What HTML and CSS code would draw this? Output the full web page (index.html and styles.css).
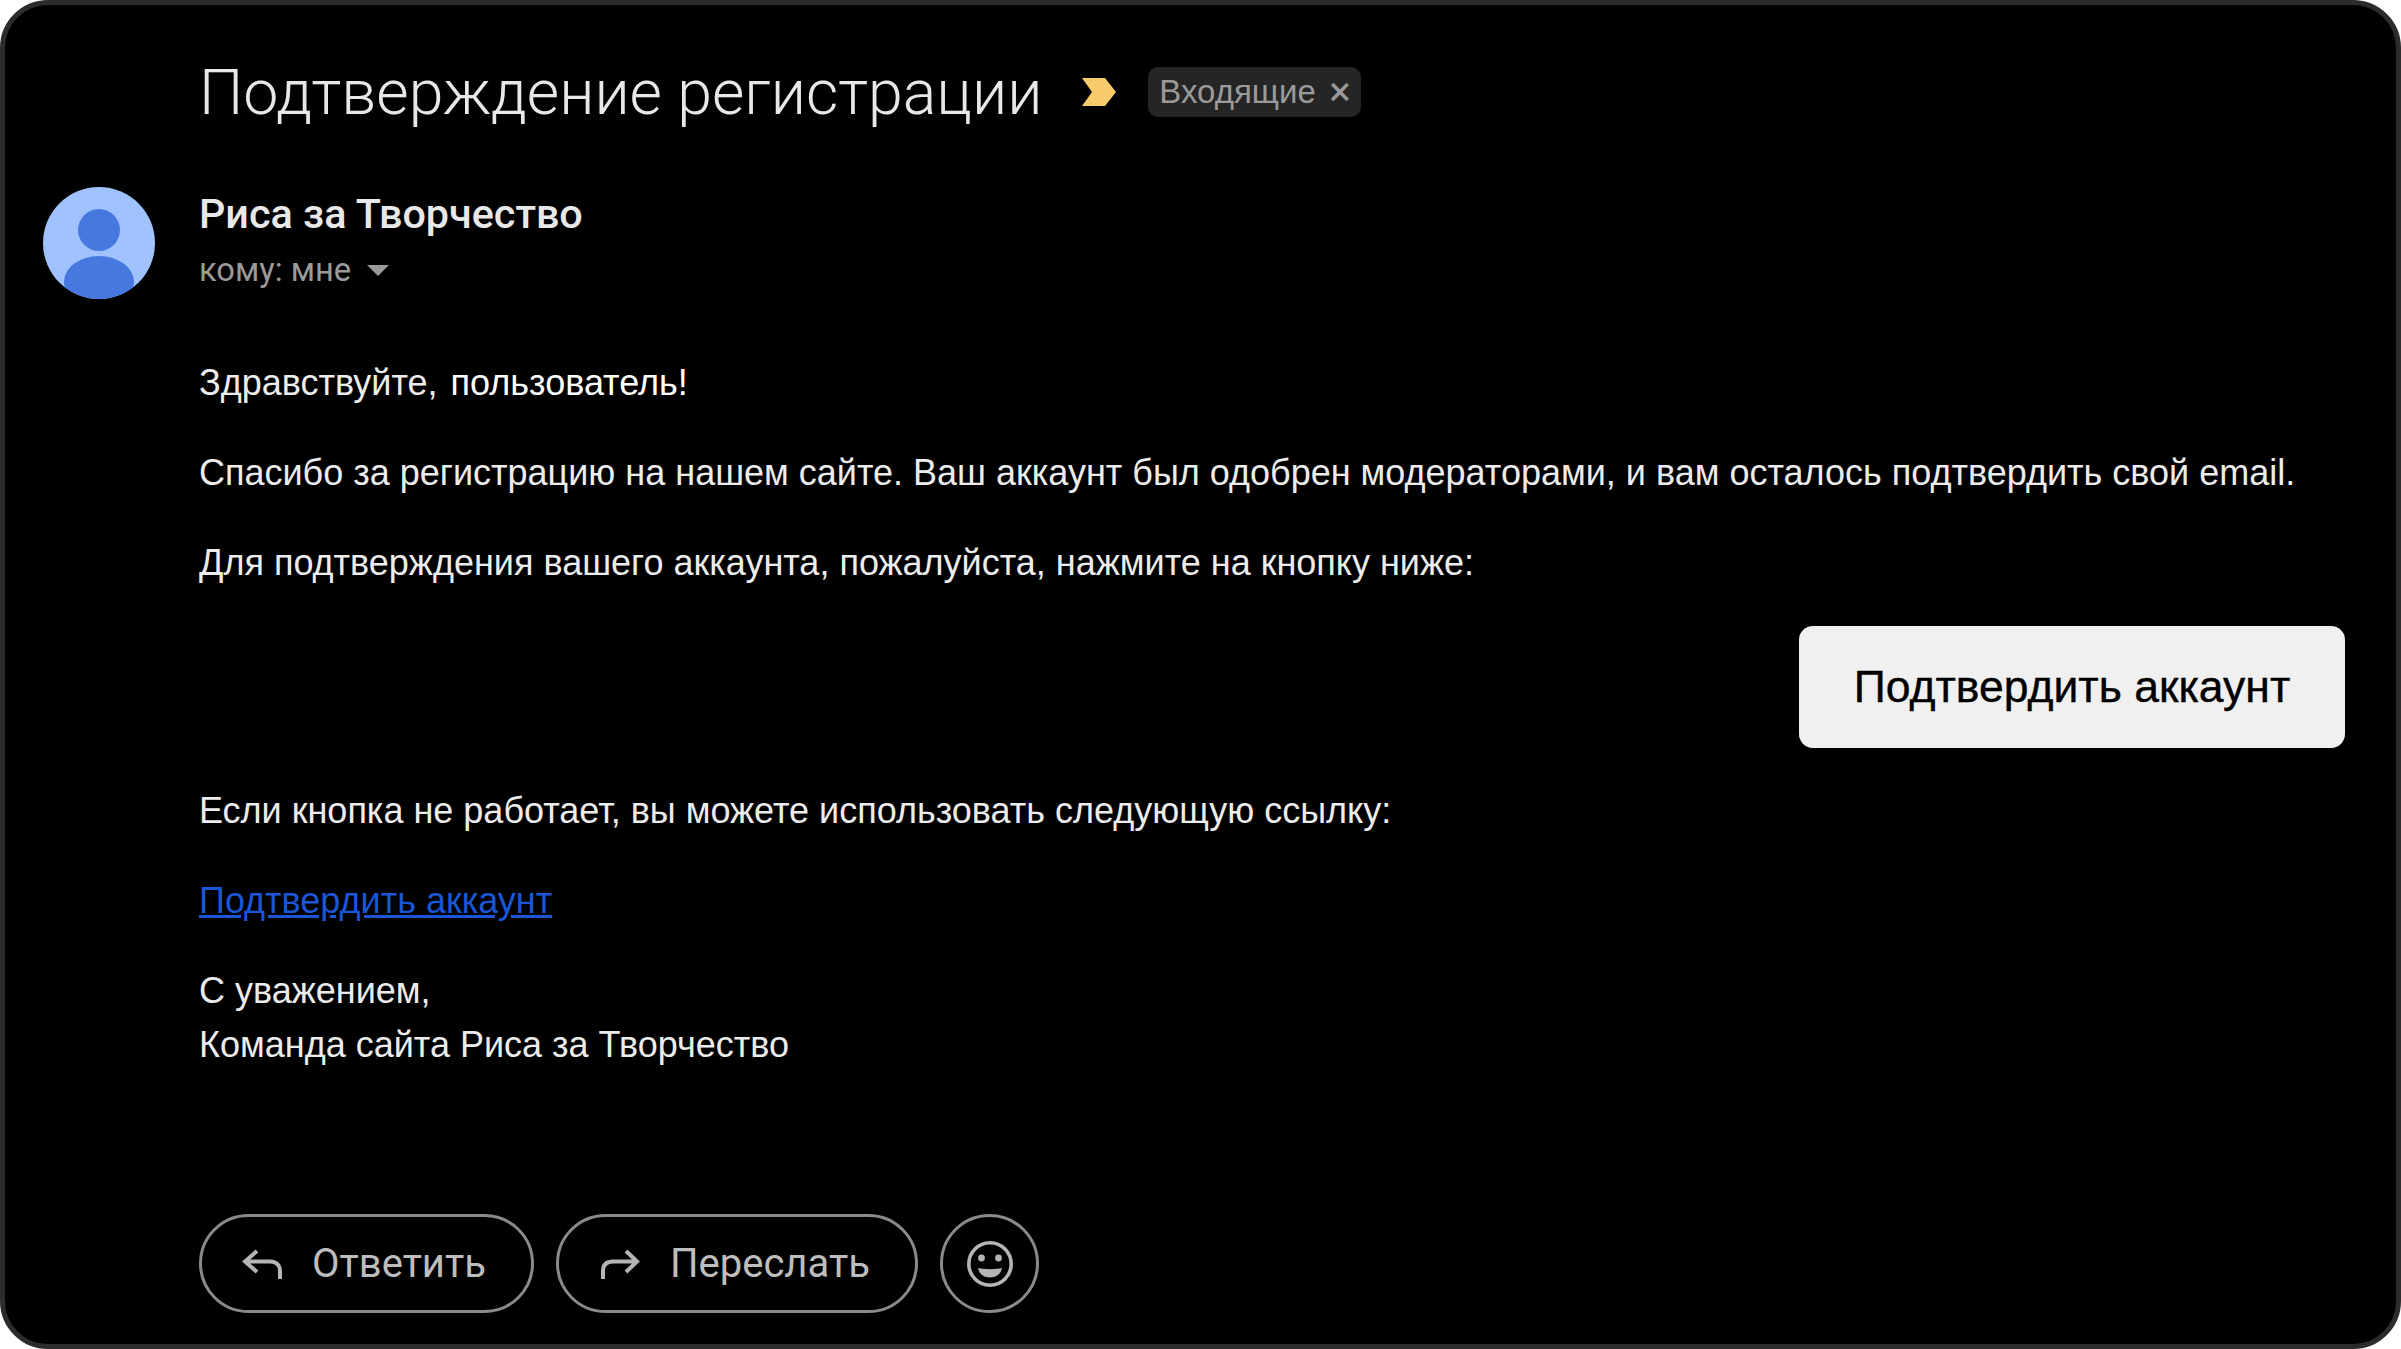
FILE: index.html
```html
<!DOCTYPE html>
<html lang="ru">
<head>
    <meta charset="UTF-8">
    <meta name="viewport" content="width=device-width, initial-scale=1.0">
    <title>Подтверждение регистрации</title>
    <link rel="stylesheet" href="styles.css">
</head>
<body>
    <div class="mail">
        <div class="subject">
            <h1>Подтверждение регистрации</h1>
            <svg class="marker" viewBox="0 0 34 28" width="34" height="28"><path d="M0 0H23L34 14L23 28H0L10 14Z" fill="#f7cb6b"/></svg>
            <span class="label">Входящие<span class="label-x">×</span></span>
        </div>
        <div class="sender">
            <svg class="avatar" viewBox="0 0 112 112" width="112" height="112">
                <defs><clipPath id="round"><circle cx="56" cy="56" r="56"/></clipPath></defs>
                <g clip-path="url(#round)">
                    <rect width="112" height="112" fill="#a0c3ff"/>
                    <circle cx="56" cy="43" r="21" fill="#4678e0"/>
                    <ellipse cx="56" cy="95" rx="35" ry="26" fill="#4678e0"/>
                </g>
            </svg>
            <div class="sender-info">
                <div class="sender-name">Риса за Творчество</div>
                <div class="sender-to">кому: мне<span class="caret"></span></div>
            </div>
        </div>
        <div class="body">
            <p>Здравствуйте, <span class="user">пользователь!</span></p>
            <p>Спасибо за регистрацию на нашем сайте. Ваш аккаунт был одобрен модераторами, и вам осталось подтвердить свой email.</p>
            <p>Для подтверждения вашего аккаунта, пожалуйста, нажмите на кнопку ниже:</p>
            <div class="confirm-row"><a class="confirm" href="#">Подтвердить аккаунт</a></div>
            <p>Если кнопка не работает, вы можете использовать следующую ссылку:</p>
            <p><a class="link" href="#">Подтвердить аккаунт</a></p>
            <p>С уважением,<br>Команда сайта Риса за Творчество</p>
        </div>
        <div class="actions">
            <button class="action reply">
                <svg viewBox="0 0 40 32" width="40" height="32"><path d="M15 3L3 13.5L15 24M3 13.5H28C34 13.5 38 17 38 23V31" fill="none" stroke="#b5b5b5" stroke-width="4"/></svg>
                Ответить
            </button>
            <button class="action forward">
                <svg viewBox="0 0 40 32" width="40" height="32"><path d="M26 3L37 13.5L26 24M37 13.5H13C6 13.5 3 17 3 23V31" fill="none" stroke="#b5b5b5" stroke-width="4"/></svg>
                Переслать
            </button>
            <button class="action emoji">
                <svg viewBox="0 0 48 48" width="48" height="48">
                    <circle cx="24" cy="24" r="21.2" fill="none" stroke="#b5b5b5" stroke-width="3.6"/>
                    <circle cx="15.5" cy="18" r="3.4" fill="#b5b5b5"/>
                    <circle cx="32.5" cy="18" r="3.4" fill="#b5b5b5"/>
                    <path d="M12 28C18 29.5 30 29.5 36 28C35 34 30 37.5 24 37.5C18 37.5 13 34 12 28Z" fill="#b5b5b5"/>
                </svg>
            </button>
        </div>
    </div>
</body>
</html>
```

FILE: styles.css
```css
html, body {
    margin: 0;
    height: 100%;
    background-color: #fff;
}
body {
    font-family: "Liberation Sans", Arial, sans-serif;
}
.mail {
    box-sizing: border-box;
    height: 1349px;
    background-color: #000;
    border: 5px solid #2c2c2e;
    border-radius: 48px;
    padding: 55px 51px 0 38px;
    overflow: hidden;
}
.subject {
    display: flex;
    align-items: center;
    margin-left: 156px;
    height: 64px;
}
.subject h1 {
    margin: 0;
    font-family: Roboto, sans-serif;
    font-size: 62.6px;
    font-weight: 300;
    color: #e8e8e8;
    white-space: nowrap;
}
.marker {
    margin-left: 40px;
}
.label {
    margin-left: 32px;
    display: flex;
    align-items: center;
    height: 50px;
    padding: 0 10px 0 11px;
    background-color: #252525;
    border-radius: 10px;
    font-size: 33px;
    color: #9a9a9a;
}
.label-x {
    margin-left: 13px;
    font-size: 38px;
    -webkit-text-stroke: 0.6px #9a9a9a;
}
.sender {
    display: flex;
    align-items: flex-start;
    margin-top: 63px;
}
.avatar {
    flex-shrink: 0;
}
.sender-info {
    margin-left: 44px;
}
.sender-name {
    font-family: Roboto, sans-serif;
    font-size: 41.3px;
    font-weight: 500;
    line-height: 50px;
    color: #e8e8e8;
    margin-top: 2px;
}
.sender-to {
    display: flex;
    align-items: center;
    font-family: Roboto, sans-serif;
    font-size: 32.7px;
    line-height: 40px;
    color: #9a9a9a;
    margin-top: 11px;
}
.caret {
    margin-left: 16px;
    border-left: 11px solid transparent;
    border-right: 11px solid transparent;
    border-top: 11px solid #9a9a9a;
}
.body {
    margin: 57px 0 0 156px;
    font-size: 36px;
    line-height: 54px;
    color: #ececec;
}
.body p {
    margin: 0 0 36px;
}
.user {
    margin-left: 3px;
    color: #fff;
}
.confirm-row {
    display: flex;
    justify-content: flex-end;
    margin: 0 0 36px;
}
.confirm {
    display: flex;
    align-items: center;
    justify-content: center;
    width: 546px;
    height: 122px;
    background-color: #f0f0f0;
    border-radius: 14px;
    color: #000;
    font-size: 44.5px;
    -webkit-text-stroke: 0.4px #000;
    text-decoration: none;
}
.link {
    color: #1a56d6;
}
.actions {
    display: flex;
    gap: 22px;
    margin: 142px 0 0 156px;
}
.action {
    box-sizing: border-box;
    display: flex;
    align-items: center;
    gap: 30px;
    height: 99px;
    background: none;
    border: 3px solid #8a8a8a;
    border-radius: 50px;
    color: #bdbdbd;
    font-family: Roboto, sans-serif;
    font-size: 40px;
    padding: 0 0 0 40px;
}
.reply {
    width: 335px;
}
.forward {
    width: 362px;
    padding-left: 41px;
}
.emoji {
    width: 99px;
    justify-content: center;
    padding: 0;
}
```
